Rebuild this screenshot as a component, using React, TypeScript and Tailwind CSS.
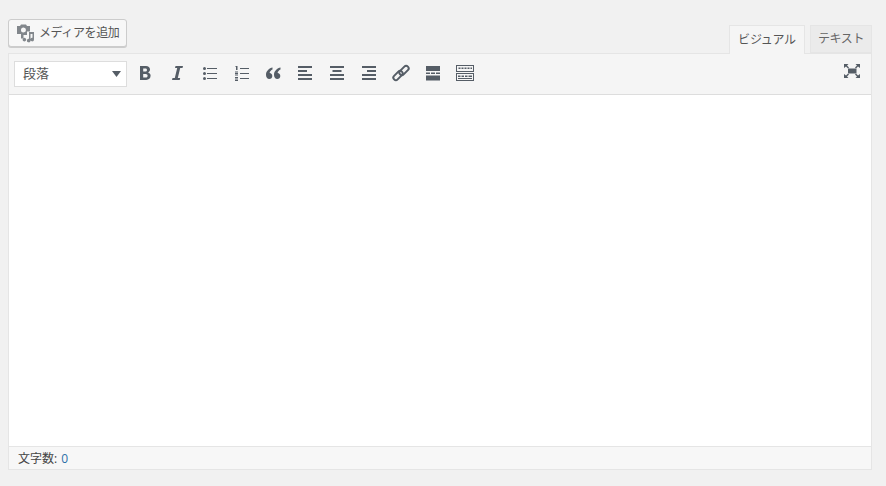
import type { ReactNode } from "react";

const FONT = "font-['Open_Sans','Noto_Sans_CJK_JP',sans-serif]";

function Icon({ children }: { children: ReactNode }) {
  return (
    <span className="flex h-[28px] w-[28px] items-center justify-center text-[#555d66]">
      <svg width="20" height="20" viewBox="0 0 20 20" fill="currentColor">
        {children}
      </svg>
    </span>
  );
}

const toolbarIcons: { name: string; icon: ReactNode }[] = [
  {
    name: "bold",
    icon: (
      <path
        fillRule="evenodd"
        d="M5 3h6c2.400 0 4 1.300 4 3.400 0 1.400-.8 2.500-2 3 1.600.4 2.600 1.600 2.600 3.200 0 2.900-1.800 4.400-4.400 4.400H5V3zm3.200 2.500v3h2.300c1 0 1.500-.6 1.500-1.500s-.6-1.500-1.500-1.500H8.200zm0 5.400v3.600h2.600c1.200 0 1.800-.7 1.800-1.800s-.7-1.800-1.800-1.800H8.200z"
      />
    ),
  },
  { name: "italic", icon: <path d="M8.500 3H16l-.5 2h-2.300l-2.400 10h2.400l-.5 2H5l.5-2h2.300L10.200 5H8l.5-2z" /> },
  {
    name: "ul",
    icon: (
      <>
        <circle cx="5.500" cy="5.500" r="1.500" />
        <circle cx="5.500" cy="10.500" r="1.500" />
        <circle cx="5.500" cy="15.500" r="1.500" />
        <rect x="8" y="5" width="10" height="1" />
        <rect x="8" y="10" width="10" height="1" />
        <rect x="8" y="15" width="10" height="1" />
      </>
    ),
  },
  {
    name: "ol",
    icon: (
      <>
        <rect x="4.500" y="3" width="2" height="1" />
        <rect x="5" y="4" width="1.500" height="3" />
        <rect x="4" y="8.500" width="3" height="1" />
        <rect x="4" y="10" width="3" height="1" />
        <rect x="4" y="11.500" width="3" height="1" />
        <rect x="4" y="14" width="3" height="1" />
        <rect x="4" y="15.500" width="3" height="1" />
        <rect x="4" y="17" width="3" height="1" />
        <rect x="9" y="5" width="9" height="1" />
        <rect x="9" y="10" width="9" height="1" />
        <rect x="9" y="15" width="9" height="1" />
      </>
    ),
  },
  {
    name: "quote",
    icon: (
      <path d="M9.500 4.500C6.300 5.200 3 7.800 3 11.800 3 14.200 4.300 16 6.300 16c1.700 0 3-1.300 3-3 0-1.600-1.100-2.800-2.700-2.900.3-1.600 1.500-2.900 2.900-3.500v-2.100zm8 0c-3.200.7-6.500 3.300-6.500 7.300 0 2.400 1.300 4.200 3.300 4.200 1.700 0 3-1.300 3-3 0-1.600-1.100-2.800-2.700-2.900.3-1.600 1.500-2.900 2.900-3.500v-2.100z" />
    ),
  },
  {
    name: "align-left",
    icon: (
      <>
        <rect x="3" y="3" width="14" height="2" />
        <rect x="3" y="7" width="9" height="2" />
        <rect x="3" y="11" width="14" height="2" />
        <rect x="3" y="15" width="14" height="2" />
      </>
    ),
  },
  {
    name: "align-center",
    icon: (
      <>
        <rect x="3" y="3" width="14" height="2" />
        <rect x="5.500" y="7" width="9" height="2" />
        <rect x="3" y="11" width="14" height="2" />
        <rect x="3" y="15" width="14" height="2" />
      </>
    ),
  },
  {
    name: "align-right",
    icon: (
      <>
        <rect x="3" y="3" width="14" height="2" />
        <rect x="8" y="7" width="9" height="2" />
        <rect x="3" y="11" width="14" height="2" />
        <rect x="3" y="15" width="14" height="2" />
      </>
    ),
  },
  {
    name: "link",
    icon: (
      <g fill="none" stroke="currentColor" strokeWidth="2">
        <rect x="1.500" y="10" width="11" height="5" rx="2.500" transform="rotate(-45 7 12.500)" />
        <rect x="7.500" y="5" width="11" height="5" rx="2.500" transform="rotate(-45 13 7.500)" />
      </g>
    ),
  },
  {
    name: "more",
    icon: (
      <>
        <rect x="3" y="3" width="14" height="5" />
        <rect x="3" y="9.500" width="4" height="1.500" />
        <rect x="8" y="9.500" width="4" height="1.500" />
        <rect x="13" y="9.500" width="4" height="1.500" />
        <rect x="3" y="12.500" width="14" height="5" />
      </>
    ),
  },
  {
    name: "kitchen-sink",
    icon: (
      <>
        <path fillRule="evenodd" d="M1 2h18v7H1V2zm1 1v5h16V3H2z" />
        <path fillRule="evenodd" d="M1 10h18v8H1v-8zm1 1v6h16v-6H2z" />
        <path d="M3.500 4.500h2V6h-2zM6.500 4.500h2V6h-2zM9.500 4.500h2V6h-2zM12.500 4.500h2V6h-2zM15.500 4.500h1.500V6h-1.500z" />
        <path d="M3 12.500h2.500V14H3zM6.500 12.500h2.500V14H6.500zM10 12.500h2.500V14H10zM13.500 12.500H17V14h-3.500zM3 15h14v1H3z" />
      </>
    ),
  },
];

export default function App() {
  return (
    <div className={`min-h-[486px] bg-[#f1f1f1] px-2 pt-[19px] text-[#32373c] ${FONT}`}>
      <div className="flex h-[34px] w-[864px] items-start justify-between">
        <button className="flex h-[28px] w-[119px] items-center rounded-[3px] border border-[#cccccc] bg-[#f7f7f7] pl-[7px] text-[12px] text-[#555555] shadow-[0_1px_0_#cccccc]">
          <svg width="20" height="20" viewBox="0 0 20 20" fill="#82878c" className="mr-[3px] shrink-0">
            <path fillRule="evenodd" d="M1 3h3l1-1.500h5L11 3h3v5.500h-3V12H7.500v3.500H5V11H1V3zm6.500 1.500a2.500 2.500 0 1 0 0 5 2.500 2.500 0 0 0 0-5z" />
            <path d="M13 9h5v7.500a1.800 1.800 0 1 1-1.500-1.700V11h-2v6.500a1.800 1.800 0 1 1-1.500-1.700V9zM7 15.500a1.800 1.800 0 1 0 3.200 1A1.800 1.800 0 0 0 7 15.500z" />
          </svg>
          <span className="whitespace-nowrap tracking-[-0.4px]">メディアを追加</span>
        </button>
        <div className="flex items-start gap-[5px] pt-[6px]">
          <button className="relative z-10 h-[29px] w-[76px] border border-b-0 border-[#e5e5e5] bg-[#f5f5f5] text-[12px] tracking-[-0.2px] text-[#555555]">
            ビジュアル
          </button>
          <button className="h-[28px] w-[62px] border border-[#e5e5e5] bg-[#ebebeb] text-[12px] tracking-[-0.4px] text-[#666666]">
            テキスト
          </button>
        </div>
      </div>

      <div className="flex h-[417px] w-[864px] flex-col border border-[#e5e5e5] bg-white">
        <div className="flex h-[41px] shrink-0 items-start justify-between border-b border-[#dddddd] bg-[#f5f5f5] pl-[5px] pr-[9px]">
          <div className="flex items-start pt-[5px]">
            <div className="mt-[2px] mr-[4px] flex h-[26px] w-[113px] items-center justify-between border border-[#dddddd] bg-white pl-[8px] pr-[5px] text-[13px] text-[#555555]">
              <span>段落</span>
              <svg width="9" height="6" viewBox="0 0 9 6" fill="#555d66">
                <path d="M0 0h9L4.500 6z" />
              </svg>
            </div>
            <div className="flex gap-[4px]">
              {toolbarIcons.map((item) => (
                <Icon key={item.name}>{item.icon}</Icon>
              ))}
            </div>
          </div>
          <svg width="20" height="20" viewBox="0 0 20 20" fill="#555d66" className="mt-[7px]">
            <path d="M6 7.500h8.500v5H6z" />
            <path d="M2 3h4.500L5 4.500 7 6.500 6 7.500 4 5.500 2 7zM18 3h-4.500L15 4.500 13 6.500 14 7.500 16 5.500 18 7zM2 17h4.500L5 15.500 7 13.500 6 12.500 4 14.500 2 13zM18 17h-4.500L15 15.500 13 13.500 14 12.500 16 14.500 18 13z" />
          </svg>
        </div>

        <div className="min-h-0 flex-1 bg-white" />

        <div className="flex h-[23px] shrink-0 items-center border-t border-[#e5e5e5] bg-[#f7f7f7] pl-[9px] pt-[1px] text-[12px] text-[#444444]">
          文字数: <span className="ml-[4px] text-[#2a6fa8]">0</span>
        </div>
      </div>
    </div>
  );
}
